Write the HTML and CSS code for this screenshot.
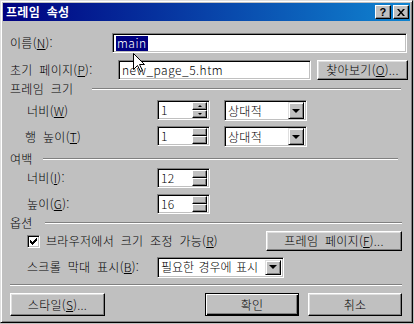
FILE: index.html
```html
<!DOCTYPE html>
<html lang="ko">
<head>
    <meta charset="UTF-8">
    <title>프레임 속성</title>
    <link rel="stylesheet" href="styles.css">
</head>
<body>
    <div class="window">
        <div class="titlebar">
            <span class="title">프레임 속성</span>
            <div class="title-btns">
                <span class="tbtn">?</span>
                <span class="tbtn">
                    <svg width="8" height="7" viewBox="0 0 8 7"><path d="M0 0h2l2 2.5L6 0h2L5 3.5 8 7H6L4 4.5 2 7H0l3-3.5z" fill="#000"/></svg>
                </span>
            </div>
        </div>

        <div class="content">
            <!-- name -->
            <div class="row r-name">
                <span class="lbl">이름(<u>N</u>):</span>
                <div class="field w-name"><span class="sel">main</span></div>
            </div>
            <!-- initial page -->
            <div class="row r-page">
                <span class="lbl">초기 페이지(<u>P</u>):</span>
                <div class="field w-page">new_page_5.htm</div>
                <div class="btn w-browse">찾아보기(<u>O</u>)...</div>
            </div>

            <div class="group g-size">
                <span class="gt gt1">프레임 크기</span>
                <span class="line l1"></span>
            </div>
            <div class="row sub r-w">
                <span class="lbl2">너비(<u>W</u>)</span>
                <div class="spin">
                    <span class="val">1</span>
                    <span class="spin-btns"><span class="sb up"></span><span class="sb down"></span></span>
                </div>
                <div class="combo w-unit">
                    <span class="val">상대적</span>
                    <span class="arrow"></span>
                </div>
            </div>
            <div class="row sub r-t">
                <span class="lbl2 lbl-t">행 높이(<u>T</u>)</span>
                <div class="spin">
                    <span class="val">1</span>
                    <span class="spin-btns"><span class="sb"></span><span class="sb"></span></span>
                </div>
                <div class="combo w-unit">
                    <span class="val">상대적</span>
                    <span class="arrow"></span>
                </div>
            </div>

            <div class="group g-margin">
                <span class="gt gt2">여백</span>
                <span class="line l2"></span>
            </div>
            <div class="row sub r-i">
                <span class="lbl2">너비(<u>I</u>):</span>
                <div class="spin">
                    <span class="val">12</span>
                    <span class="spin-btns"><span class="sb"></span><span class="sb"></span></span>
                </div>
            </div>
            <div class="row sub r-g">
                <span class="lbl2">높이(<u>G</u>):</span>
                <div class="spin">
                    <span class="val">16</span>
                    <span class="spin-btns"><span class="sb"></span><span class="sb"></span></span>
                </div>
            </div>

            <div class="group g-opt">
                <span class="gt gt3">옵션</span>
                <span class="line l3"></span>
            </div>
            <div class="row sub r-check">
                <span class="check">
                    <svg width="7" height="7" viewBox="0 0 7 7"><path d="M0 2h1v1h1v1h1V3h1V2h1V1h1V0h1v3H6v1H5v1H4v1H3v1H2V6H1V5H0z" fill="#000"/></svg>
                </span>
                <span class="check-lbl">브라우저에서 크기 조정 가능(<u>R</u>)</span>
                <div class="btn w-frame">프레임 페이지(<u>F</u>)...</div>
            </div>
            <div class="row sub r-scroll">
                <span class="lbl2">스크롤 막대 표시(<u>B</u>):</span>
                <div class="combo w-scroll">
                    <span class="val">필요한 경우에 표시</span>
                    <span class="arrow"></span>
                </div>
            </div>

            <div class="sep"></div>

            <div class="row r-btns">
                <div class="btn w-style">스타일(<u>S</u>)...</div>
                <div class="btn default w-ok">확인</div>
                <div class="btn w-cancel">취소</div>
            </div>
        </div>

        <!-- mouse pointer over the name field -->
        <svg class="cursor" width="12" height="20" viewBox="0 0 12 20">
            <path d="M0.5 0.5V16.5L4.5 12.5L7.5 18.5L9.5 17.5L6.5 11.5H11.5Z" fill="#fff" stroke="#000"/>
        </svg>
    </div>
</body>
</html>
```

FILE: styles.css
```css
* {
    box-sizing: border-box;
}

body {
    margin: 0;
    background: #c0c0c0;
    font-family: "Noto Sans CJK KR", "Noto Sans", sans-serif;
    font-size: 12px;
    font-weight: 300;
    line-height: 1;
    letter-spacing: 0.3px;
    word-spacing: 3px;
    color: #000;
}

u {
    text-decoration: underline;
    text-underline-offset: 1px;
}

.window {
    position: relative;
    width: 413px;
    height: 323px;
    background: #c0c0c0;
    border: 1px solid;
    border-color: #dfdfdf #000 #000 #dfdfdf;
    box-shadow: inset 1px 1px #fff, inset -1px -1px #808080;
    padding: 2px;
}

/* title bar */
.titlebar {
    height: 18px;
    display: flex;
    align-items: center;
    justify-content: space-between;
    background: linear-gradient(to right, #000080, #1084d0);
    color: #fff;
    padding: 0 1px 0 3px;
}

.title {
    font-weight: bold;
    font-size: 12px;
}

.title-btns {
    display: flex;
    gap: 2px;
}

.tbtn {
    width: 16px;
    height: 14px;
    display: flex;
    align-items: center;
    justify-content: center;
    background: #c0c0c0;
    color: #000;
    font-family: "Liberation Sans", sans-serif;
    font-weight: bold;
    font-size: 11px;
    border: 1px solid;
    border-color: #fff #000 #000 #fff;
    box-shadow: inset -1px -1px #808080;
}

/* content rows */
.content {
    padding-left: 7px;
    display: flex;
    flex-direction: column;
}

.row {
    display: flex;
    align-items: center;
}

.sub {
    padding-left: 17px;
}

.lbl {
    width: 102px;
    white-space: nowrap;
}

.lbl2 {
    width: 130px;
    white-space: nowrap;
}

.lbl-t {
    margin-left: -2px;
    width: 132px;
}

.r-name {
    margin-top: 12px;
    height: 20px;
}

.r-page {
    margin-top: 7px;
    height: 20px;
    gap: 6px;
}

.r-w {
    margin-top: 2px;
    height: 21px;
    align-items: flex-start;
}

.r-t {
    margin-top: 5px;
    height: 21px;
    align-items: flex-start;
}

.r-i {
    height: 20px;
}

.r-g {
    margin-top: 6px;
    height: 20px;
}

.r-check {
    height: 20px;
}

.r-scroll {
    margin-top: 6px;
    height: 20px;
}

.r-w .lbl2,
.r-t .lbl2 {
    align-self: center;
}

/* sunken fields */
.field,
.spin,
.combo,
.check {
    background: #fff;
    border: 1px solid;
    border-color: #808080 #fff #fff #808080;
    box-shadow: inset 1px 1px #000, inset -1px -1px #c0c0c0;
}

.field {
    height: 20px;
    display: flex;
    align-items: center;
    padding-left: 3px;
    white-space: nowrap;
}

.w-name {
    width: 295px;
}

.w-page {
    width: 193px;
    letter-spacing: 0.5px;
}

.sel {
    background: #000080;
    color: #fff;
    padding: 1px 1px 2px;
    letter-spacing: 0.5px;
}

/* spinner */
.spin {
    width: 53px;
    height: 20px;
    display: flex;
    align-items: center;
    padding: 2px 2px 2px 3px;
}

.spin .val {
    flex: 1;
}

.spin-btns {
    width: 15px;
    height: 16px;
    display: flex;
    flex-direction: column;
}

.sb {
    flex: 1;
    background: #c0c0c0;
    border: 1px solid;
    border-color: #fff #000 #000 #fff;
    box-shadow: inset -1px -1px #808080;
    display: flex;
    align-items: center;
    justify-content: center;
}

.sb.up::before,
.sb.down::before {
    content: "";
    border-left: 2px solid transparent;
    border-right: 2px solid transparent;
}

.sb.up::before {
    border-bottom: 2px solid #000;
}

.sb.down::before {
    border-top: 2px solid #000;
}

/* combo box */
.combo {
    height: 21px;
    display: flex;
    align-items: center;
    padding: 2px 2px 2px 3px;
}

.combo .val {
    flex: 1;
    white-space: nowrap;
}

.w-unit {
    width: 83px;
    margin-left: 14px;
}

.w-scroll {
    width: 127px;
}

.w-scroll .val {
    letter-spacing: 0;
    word-spacing: 1px;
}

.arrow {
    flex: none;
    width: 16px;
    height: 17px;
    background: #c0c0c0;
    border: 1px solid;
    border-color: #dfdfdf #000 #000 #dfdfdf;
    box-shadow: inset 1px 1px #fff, inset -1px -1px #808080;
    display: flex;
    align-items: center;
    justify-content: center;
}

.arrow::before {
    content: "";
    border-left: 4px solid transparent;
    border-right: 4px solid transparent;
    border-top: 4px solid #000;
}

.w-scroll .arrow {
    height: 15px;
}

/* group headings */
.group {
    display: flex;
    align-items: center;
}

.g-size {
    height: 18px;
}

.g-margin {
    margin-top: 3px;
    height: 18px;
}

.g-opt {
    height: 17px;
}

.gt {
    white-space: nowrap;
}

.line {
    height: 2px;
    border-top: 1px solid #808080;
    border-bottom: 1px solid #fff;
}

.gt1 { width: 82px; }
.l1 { width: 309px; }
.gt2 { width: 33px; }
.l2 { width: 355px; }
.gt3 { width: 35px; }
.l3 { width: 357px; }

/* checkbox */
.check {
    flex: none;
    width: 13px;
    height: 13px;
    display: flex;
    align-items: center;
    justify-content: center;
}

.check-lbl {
    margin-left: 6px;
    white-space: nowrap;
}

/* buttons */
.btn {
    height: 20px;
    display: flex;
    align-items: center;
    justify-content: center;
    background: #c0c0c0;
    border: 1px solid;
    border-color: #fff #000 #000 #fff;
    box-shadow: inset -1px -1px #808080, inset 1px 1px #dfdfdf;
    white-space: nowrap;
}

.w-browse {
    width: 91px;
}

.w-frame {
    width: 136px;
    margin-left: auto;
    margin-right: 8px;
}

.btn.default {
    border-color: #000;
    box-shadow: inset 1px 1px #fff, inset -1px -1px #000, inset -2px -2px #808080;
}

.sep {
    margin-top: 7px;
    width: 392px;
    height: 2px;
    border-top: 1px solid #808080;
    border-bottom: 1px solid #fff;
}

.r-btns {
    margin-top: 7px;
    height: 23px;
}

.r-btns .btn {
    height: 23px;
}

.w-style {
    width: 95px;
}

.w-ok {
    width: 94px;
    margin-left: 100px;
}

.w-cancel {
    width: 94px;
    margin-left: 9px;
}

.cursor {
    position: absolute;
    left: 132px;
    top: 52px;
}
```
